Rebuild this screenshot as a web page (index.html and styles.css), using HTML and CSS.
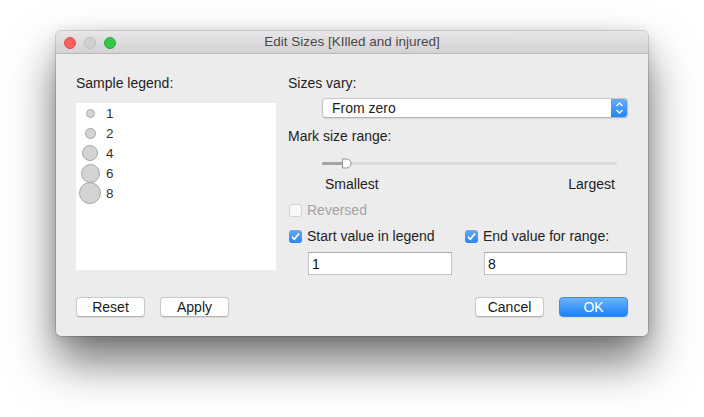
FILE: index.html
```html
<!DOCTYPE html>
<html>
<head>
<meta charset="utf-8">
<link rel="stylesheet" href="styles.css">
</head>
<body>
<div class="window">
  <div class="titlebar">
    <div class="lights">
      <span class="light red"></span><span class="light gray"></span><span class="light green"></span>
    </div>
    <div class="title">Edit Sizes [KIlled and injured]</div>
    <div></div>
  </div>
  <div class="content">
    <div class="left">
      <div class="label">Sample legend:</div>
      <div class="legend">
        <div class="row"><span class="slot"><span class="dot d1"></span></span><span class="num">1</span></div>
        <div class="row"><span class="slot"><span class="dot d2"></span></span><span class="num">2</span></div>
        <div class="row"><span class="slot"><span class="dot d4"></span></span><span class="num">4</span></div>
        <div class="row"><span class="slot"><span class="dot d6"></span></span><span class="num">6</span></div>
        <div class="row"><span class="slot"><span class="dot d8"></span></span><span class="num">8</span></div>
      </div>
    </div>
    <div class="right">
      <div class="label">Sizes vary:</div>
      <div class="popup">
        <span class="popup-text">From zero</span>
        <span class="stepper">
          <svg width="17" height="20" viewBox="0 0 17 20"><path d="M5.5 8 L8.5 5 L11.5 8" fill="none" stroke="#fff" stroke-width="1.3"/><path d="M5.5 12 L8.5 15 L11.5 12" fill="none" stroke="#fff" stroke-width="1.3"/></svg>
        </span>
      </div>
      <div class="label mt10">Mark size range:</div>
      <div class="slider">
        <div class="track"><div class="fill"></div></div>
        <svg class="knob" width="11" height="11" viewBox="0 0 11 11"><path d="M1.5 1 H5.5 A4.5 4.5 0 0 1 5.5 10 H1.5 Z" fill="#fff" stroke="#8e8e8e" stroke-width="1"/></svg>
      </div>
      <div class="range-labels"><span>Smallest</span><span>Largest</span></div>
      <div class="check-row disabled"><span class="box"></span><span>Reversed</span></div>
      <div class="pair">
        <div class="check-row"><span class="box on"><svg width="13" height="13" viewBox="0 0 13 13"><path d="M3 6.8 L5.4 9.2 L10 3.6" fill="none" stroke="#fff" stroke-width="1.7"/></svg></span><span>Start value in legend</span></div>
        <div class="check-row"><span class="box on"><svg width="13" height="13" viewBox="0 0 13 13"><path d="M3 6.8 L5.4 9.2 L10 3.6" fill="none" stroke="#fff" stroke-width="1.7"/></svg></span><span>End value for range:</span></div>
        <div class="field w144">1</div>
        <div class="field w143">8</div>
      </div>
    </div>
  </div>
  <div class="footer">
    <div class="group">
      <button class="btn">Reset</button>
      <button class="btn">Apply</button>
    </div>
    <div class="group">
      <button class="btn">Cancel</button>
      <button class="btn primary">OK</button>
    </div>
  </div>
</div>
</body>
</html>
```

FILE: styles.css
```css
html, body {
  margin: 0;
  padding: 0;
  background: #ffffff;
}
body {
  font-family: "Liberation Sans", Arial, sans-serif;
  font-size: 14px;
  color: #222;
  min-height: 417px;
  padding-top: 31px;
  box-sizing: border-box;
}
.window {
  box-sizing: border-box;
  width: 592px;
  height: 305px;
  margin: 0 0 0 56px;
  background: #ececec;
  border-radius: 5px;
  box-shadow: 0 26px 46px rgba(0,0,0,0.55), 0 0 0 1px rgba(0,0,0,0.13), 0 2px 14px rgba(0,0,0,0.14);
  overflow: hidden;
}
.titlebar {
  height: 22px;
  display: grid;
  grid-template-columns: 1fr auto 1fr;
  align-items: center;
  background: linear-gradient(#e8e6e8, #d3d1d3);
  border-bottom: 1px solid #b9b9b9;
}
.lights {
  display: flex;
  gap: 8px;
  padding-left: 8px;
  padding-top: 1px;
}
.light {
  width: 12px;
  height: 12px;
  box-sizing: border-box;
  border-radius: 50%;
}
.light.red { background: #fc605c; border: 1px solid #de4c48; }
.light.gray { background: #d0d0d0; border: 1px solid #bdbdbd; }
.light.green { background: #34c84a; border: 1px solid #27a93a; }
.title {
  font-size: 13.5px;
  color: #4a4a4a;
  line-height: 22px;
}
.content {
  display: grid;
  grid-template-columns: 200px 340px;
  column-gap: 12px;
  padding: 21px 20px 0;
}
.label {
  line-height: 16px;
  height: 16px;
  color: #1e1e1e;
}
.mt10 { margin-top: 10px; }
.legend {
  margin-top: 12px;
  height: 167px;
  background: #fff;
}
.row {
  height: 20px;
  display: flex;
  align-items: center;
}
.slot {
  width: 28px;
  display: flex;
  justify-content: center;
  align-items: center;
}
.num {
  margin-left: 2px;
  color: #333;
  font-size: 13.5px;
}
.dot {
  box-sizing: border-box;
  border-radius: 50%;
  background: #d3d3d3;
  border: 1px solid #a8a8a8;
}
.d1 { width: 9px; height: 9px; }
.d2 { width: 11px; height: 11px; }
.d4 { width: 16px; height: 16px; }
.d6 { width: 19px; height: 19px; }
.d8 { width: 22px; height: 22px; }
.popup {
  box-sizing: border-box;
  margin: 7px 0 0 34px;
  width: 306px;
  height: 20px;
  background: #fff;
  border: 1px solid #c6c6c6;
  border-bottom-color: #b4b4b4;
  border-radius: 4px;
  display: flex;
  justify-content: space-between;
  align-items: center;
  overflow: hidden;
  box-shadow: 0 0.5px 1px rgba(0,0,0,0.08);
}
.popup-text {
  padding-left: 9px;
  line-height: 18px;
  color: #1e1e1e;
}
.stepper {
  width: 17px;
  height: 20px;
  margin: -1px -1px -1px 0;
  background: linear-gradient(#69b1fa, #1b83fb);
  display: flex;
  align-items: center;
  justify-content: center;
}
.slider {
  position: relative;
  margin: 14px 0 0 34px;
  width: 295px;
  height: 11px;
  display: flex;
  align-items: center;
}
.track {
  width: 295px;
  height: 3px;
  border-radius: 2px;
  background: #dcdcdc;
}
.fill {
  width: 22px;
  height: 3px;
  border-radius: 2px;
  background: #a4a4a4;
}
.knob {
  position: absolute;
  left: 19px;
  top: 0;
}
.range-labels {
  margin: 7px 0 0 37px;
  width: 290px;
  display: flex;
  justify-content: space-between;
  line-height: 16px;
  color: #1e1e1e;
}
.check-row {
  display: flex;
  align-items: center;
  height: 16px;
  gap: 5px;
  color: #1e1e1e;
}
.right > .check-row {
  margin: 10px 0 0 1px;
}
.check-row.disabled { color: #a3a3a3; }
.box {
  box-sizing: border-box;
  width: 13px;
  height: 13px;
  border-radius: 3px;
  background: #f8f8f8;
  border: 1px solid #d2d2d2;
  display: flex;
}
.box.on {
  border: none;
  background: linear-gradient(#66abf7, #2a84f0);
}
.pair {
  margin-top: 10px;
  display: grid;
  grid-template-columns: 176px 164px;
  row-gap: 8px;
}
.pair .check-row { margin-left: 1px; }
.field {
  box-sizing: border-box;
  margin-left: 20px;
  height: 23px;
  background: #fff;
  border: 1px solid #c4c4c4;
  border-top-color: #acacac;
  padding-left: 3px;
  line-height: 22px;
  color: #111;
}
.w144 { width: 144px; }
.w143 { width: 143px; }
.footer {
  margin-top: 22px;
  padding: 0 20px;
  display: flex;
  justify-content: space-between;
}
.group {
  display: flex;
  gap: 15px;
}
.btn {
  box-sizing: border-box;
  width: 69px;
  height: 20px;
  padding: 0;
  font-family: "Liberation Sans", Arial, sans-serif;
  font-size: 14px;
  color: #1a1a1a;
  background: #fff;
  border: 1px solid #c8c8c8;
  border-bottom-color: #b2b2b2;
  border-radius: 4px;
  box-shadow: 0 0.5px 1px rgba(0,0,0,0.08);
}
.btn.primary {
  color: #fff;
  border: 1px solid #3a8cf3;
  background: linear-gradient(#6cb3fa, #1a82fb);
}
```
